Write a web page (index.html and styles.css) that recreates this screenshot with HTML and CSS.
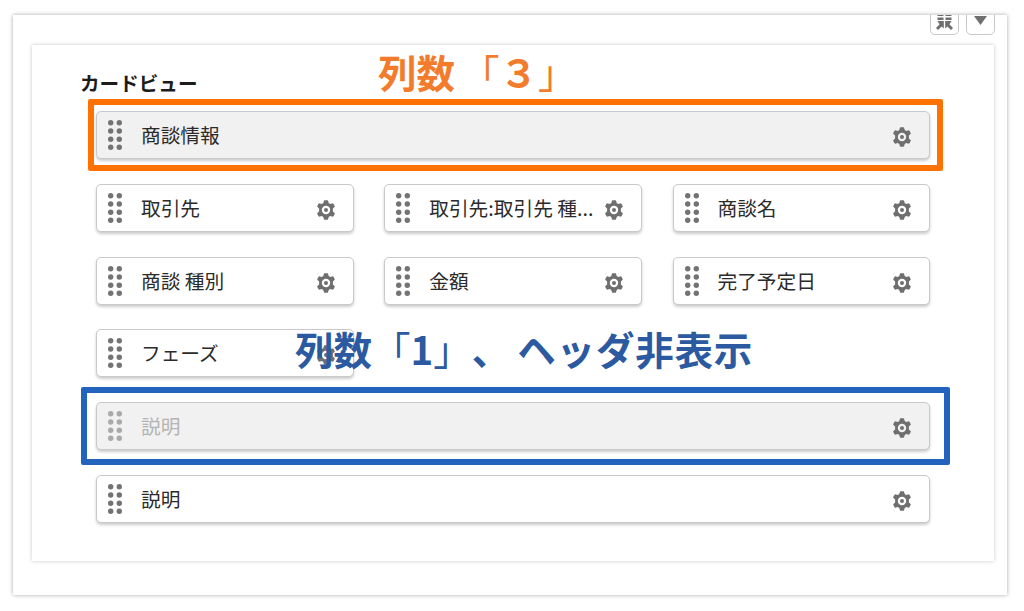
FILE: index.html
```html
<!DOCTYPE html>
<html lang="ja">
<head>
<meta charset="utf-8">
<title>カードビュー</title>
<link rel="stylesheet" href="styles.css">
</head>
<body>
<svg class="defs" width="0" height="0" aria-hidden="true">
  <symbol id="grip" viewBox="0 0 14 30">
    <g fill="currentColor">
      <circle cx="2.7" cy="2.7" r="2.7"/><circle cx="11.300" cy="2.7" r="2.7"/>
      <circle cx="2.7" cy="11" r="2.7"/><circle cx="11.300" cy="11" r="2.7"/>
      <circle cx="2.7" cy="19.3" r="2.7"/><circle cx="11.300" cy="19.3" r="2.7"/>
      <circle cx="2.7" cy="27.3" r="2.7"/><circle cx="11.300" cy="27.3" r="2.7"/>
    </g>
  </symbol>
  <symbol id="gear" viewBox="0 0 20 20">
    <path fill="#6f6f6f" fill-rule="evenodd" d="M8 .6C8.600.1 11.400.1 12 .6L12.700 3.100 14.200 4 16.800 3.300C17.500 3.600 18.900 6 18.800 6.800L16.900 8.600V11.400L18.800 13.200C18.900 14 17.500 16.400 16.800 16.700L14.200 16 12.700 16.900 12 19.400C11.400 19.900 8.600 19.900 8 19.400L7.300 16.900 5.800 16 3.200 16.700C2.500 16.400 1.100 14 1.200 13.200L3.100 11.400V8.600L1.200 6.800C1.100 6 2.500 3.600 3.200 3.300L5.800 4 7.300 3.100ZM10 5.800A4.200 4.200 0 1 0 10 14.200 4.200 4.200 0 1 0 10 5.800ZM10 8A2 2 0 1 1 10 12 2 2 0 1 1 10 8Z"/>
  </symbol>
</svg>

<main class="panel">
  <div class="panel-tools">
    <span class="tool">
      <svg class="tool-compress" viewBox="0 0 17 20" aria-hidden="true">
        <path fill="#6f6f6f" d="M1.500 0H7.500V6H1.500ZM9.500 0H15.500V6H9.500ZM1.500 7.500H7.500V10H1.500ZM9.500 7.500H15.500V10H9.500ZM7.800 11V18.500L5.700 16.500 2 20 0 18 3.600 14.300 1.400 11ZM9.200 11V18.500L11.300 16.500 15 20 17 18 13.400 14.300 15.600 11Z"/>
      </svg>
    </span>
    <span class="tool">
      <svg class="tool-caret" viewBox="0 0 13 9" aria-hidden="true"><path fill="#6f6f6f" d="M0 0H13L6.500 9Z"/></svg>
    </span>
  </div>

  <section class="card">
    <h2 class="card-title">カードビュー</h2>
    <div class="rows">
      <div class="field field-head">
        <svg class="grip"><use href="#grip"/></svg>
        <span class="label">商談情報</span>
        <svg class="gear"><use href="#gear"/></svg>
      </div>
      <div class="triple">
        <div class="field"><svg class="grip"><use href="#grip"/></svg><span class="label">取引先</span><svg class="gear"><use href="#gear"/></svg></div>
        <div class="field"><svg class="grip"><use href="#grip"/></svg><span class="label">取引先:取引先 種...</span><svg class="gear"><use href="#gear"/></svg></div>
        <div class="field"><svg class="grip"><use href="#grip"/></svg><span class="label">商談名</span><svg class="gear"><use href="#gear"/></svg></div>
      </div>
      <div class="triple">
        <div class="field"><svg class="grip"><use href="#grip"/></svg><span class="label">商談 種別</span><svg class="gear"><use href="#gear"/></svg></div>
        <div class="field"><svg class="grip"><use href="#grip"/></svg><span class="label">金額</span><svg class="gear"><use href="#gear"/></svg></div>
        <div class="field"><svg class="grip"><use href="#grip"/></svg><span class="label">完了予定日</span><svg class="gear"><use href="#gear"/></svg></div>
      </div>
      <div class="triple">
        <div class="field"><svg class="grip"><use href="#grip"/></svg><span class="label">フェーズ</span><svg class="gear"><use href="#gear"/></svg></div>
      </div>
      <div class="field field-head field-muted">
        <svg class="grip"><use href="#grip"/></svg>
        <span class="label">説明</span>
        <svg class="gear"><use href="#gear"/></svg>
      </div>
      <div class="field">
        <svg class="grip"><use href="#grip"/></svg>
        <span class="label">説明</span>
        <svg class="gear"><use href="#gear"/></svg>
      </div>
    </div>
  </section>
</main>

<div class="frame frame-orange"></div>
<div class="frame frame-blue"></div>
<div class="note note-orange">列数<span class="thin open">「</span>３<span class="thin">」</span></div>
<div class="note note-blue">列数<span class="thin">「</span>1<span class="thin">」</span><span class="comma">、</span><span class="tail">ヘッダ非表示</span></div>
</body>
</html>
```

FILE: styles.css
```css
* {
  box-sizing: border-box;
}

html,
body {
  margin: 0;
  height: 611px;
  overflow: hidden;
  background: #fff;
}

body {
  position: relative;
  padding: 15px 17px 16px 13px;
  font-family: "Noto Sans CJK JP", "Noto Sans", sans-serif;
  color: #2b2b2b;
  text-spacing-trim: space-all;
}

.defs {
  position: absolute;
}

.panel {
  position: relative;
  height: 580px;
  padding: 30px 13px 0 19px;
  background: #fff;
  box-shadow: 0 0 4px rgba(0, 0, 0, 0.35);
  overflow: hidden;
}

.panel-tools {
  position: absolute;
  top: -10px;
  right: 12px;
  display: flex;
  gap: 7px;
}

.tool {
  display: flex;
  align-items: flex-end;
  justify-content: center;
  width: 29px;
  height: 30px;
  background: #fff;
  border: 1px solid #c9c9c9;
  border-radius: 5px;
}

.tool-compress {
  width: 17px;
  height: 20px;
  margin-bottom: 4px;
}

.tool-caret {
  width: 13px;
  height: 9px;
  margin-bottom: 9px;
}

.card {
  height: 516px;
  padding: 23px 64px 0 48px;
  background: #fff;
  box-shadow: 0 0 4px rgba(0, 0, 0, 0.22);
}

.card-title {
  margin: 0 0 14px;
  font-size: 19.600px;
  line-height: 29px;
  font-weight: 700;
  color: #1c1c1c;
}

.rows {
  display: flex;
  flex-direction: column;
  gap: 24.800px;
  margin-left: 16px;
}

.triple {
  display: grid;
  grid-template-columns: repeat(3, 1fr);
  gap: 30.750px;
}

.field {
  display: flex;
  align-items: center;
  height: 48px;
  padding: 0 17px 0 11px;
  background: #fff;
  border: 1px solid #c9c9c9;
  border-radius: 5px;
  box-shadow: 0 2px 3px rgba(0, 0, 0, 0.2);
}

.field-head {
  background: #f1f1f1;
}

.grip {
  flex: none;
  width: 14px;
  height: 30px;
  color: #737373;
}

.label {
  flex: 1;
  min-width: 0;
  margin: 0 6px 0 19px;
  font-size: 19.700px;
  line-height: 28px;
  white-space: nowrap;
}

.gear {
  flex: none;
  width: 20px;
  height: 20px;
  margin-top: 4px;
}

.field-muted .label {
  color: #b4b4b4;
}

.field-muted .grip {
  color: #a9a9a9;
}

.frame {
  position: absolute;
  border-radius: 2px;
  pointer-events: none;
}

.frame-orange {
  left: 88px;
  top: 99px;
  width: 855px;
  height: 72px;
  border: 6px solid #ff7100;
}

.frame-blue {
  left: 81px;
  top: 387px;
  width: 869px;
  height: 78px;
  border: 6px solid #2264bd;
}

.note {
  position: absolute;
  font-size: 38.500px;
  line-height: 50px;
  font-weight: 700;
  white-space: nowrap;
}

.thin {
  font-weight: 400;
}

.open {
  margin-left: 6px;
}

.comma {
  margin-right: 7px;
}

.tail {
  letter-spacing: 0.8px;
}

.note-orange {
  left: 378px;
  top: 46px;
  color: #f27c2b;
}

.note-blue {
  left: 295px;
  top: 323px;
  color: #2c5aa0;
}
```
